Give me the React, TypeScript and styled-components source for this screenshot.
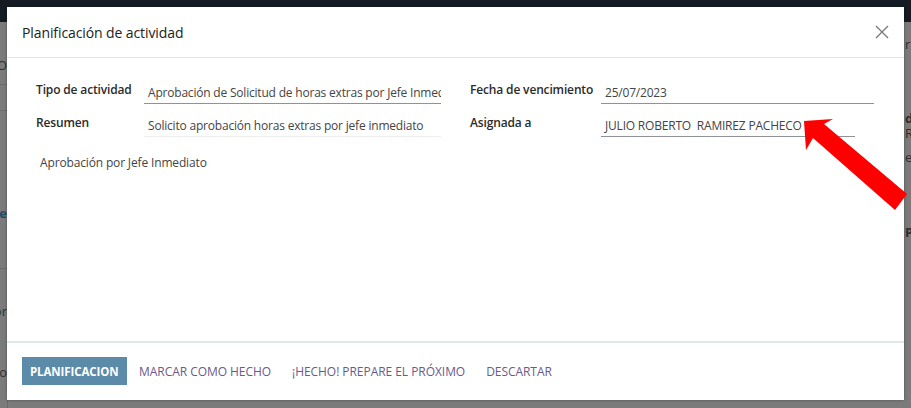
import styled, { createGlobalStyle } from "styled-components";

const GlobalStyle = createGlobalStyle`
  html, body {
    margin: 0;
    padding: 0;
    width: 911px;
    height: 408px;
    overflow: hidden;
    font-family: "Open Sans", "Noto Sans", sans-serif;
  }
`;

const Page = styled.div`
  position: relative;
  width: 911px;
  height: 408px;
  background: #7b7b7b;
  overflow: hidden;
`;

const TopBar = styled.div`
  height: 22px;
  background: #141b23;
`;

const Backdrop = styled.div`
  position: absolute;
  left: 0;
  right: 0;
  top: 22px;
  bottom: 0;
  display: flex;
  justify-content: space-between;
  font-size: 13px;
`;

const Edge = styled.div<{ side: "left" | "right" }>`
  width: 7px;
  height: 100%;
  position: relative;
  overflow: hidden;
  ${(p) => (p.side === "left" ? "border-right: 1px solid #6a6a6a;" : "")}
`;

const Ghost = styled.span<{ top: number; side: "left" | "right" }>`
  position: absolute;
  top: ${(p) => p.top}px;
  ${(p) => (p.side === "left" ? "right: 0;" : "left: 1px;")}
  white-space: nowrap;
  line-height: 14px;
  color: #2f2f2f;
`;

const GhostLine = styled.div<{ top: number }>`
  position: absolute;
  top: ${(p) => p.top}px;
  left: 0;
  right: 0;
  height: 1px;
  background: #6d6d6d;
`;

const Modal = styled.div`
  position: absolute;
  left: 7px;
  top: 7px;
  width: 897px;
  height: 393px;
  background: #fff;
  display: flex;
  flex-direction: column;
  box-shadow: 0 0 3px rgba(0, 0, 0, 0.35);
`;

const Header = styled.div`
  height: 51px;
  box-sizing: border-box;
  padding: 0 14px 0 15px;
  display: flex;
  align-items: center;
  justify-content: space-between;
  border-bottom: 1px solid #e6e6e6;
`;

const Title = styled.h4`
  margin: 0;
  font-size: 14px;
  font-weight: 500;
  color: #222;
  letter-spacing: -0.1px;
`;

const Close = styled.button`
  border: none;
  background: none;
  padding: 0;
  width: 16px;
  height: 16px;
  display: flex;
  cursor: pointer;
`;

const Body = styled.div`
  flex: 1;
  padding: 22px 29px 0 29px;
`;

const Grid = styled.div`
  display: grid;
  grid-template-columns: 434px 1fr;
`;

const Column = styled.div`
  display: flex;
  flex-direction: column;
  gap: 9px;
`;

const Row = styled.div<{ labelWidth: number }>`
  display: grid;
  grid-template-columns: ${(p) => p.labelWidth}px 1fr;
  align-items: start;
`;

const Label = styled.label`
  font-size: 12px;
  font-weight: 600;
  color: #2b2b2b;
  line-height: 18px;
  padding-top: 1px;
  white-space: nowrap;
  letter-spacing: -0.15px;
`;

const Field = styled.div<{ width: number; line: string }>`
  width: ${(p) => p.width}px;
  height: 24px;
  box-sizing: border-box;
  padding: 4px 0 0 4px;
  font-size: 12px;
  color: #444;
  white-space: nowrap;
  overflow: hidden;
  letter-spacing: -0.2px;
  border-bottom: 1px solid ${(p) => p.line};
`;

const Note = styled.p`
  margin: 17px 0 0 4px;
  font-size: 12px;
  color: #444;
  letter-spacing: -0.15px;
`;

const Footer = styled.div`
  height: 59px;
  box-sizing: border-box;
  border-top: 2px solid #e2e7ec;
  padding: 14px 15px 0 15px;
  display: flex;
  align-items: flex-start;
  gap: 2px;
`;

const Button = styled.button<{ primary?: boolean }>`
  height: 28px;
  border: none;
  padding: 0 ${(p) => (p.primary ? "8px" : "9.5px")};
  font-family: "Open Sans", "Noto Sans", sans-serif;
  font-size: ${(p) => (p.primary ? "11.5px" : "12px")};
  text-transform: uppercase;
  cursor: pointer;
  letter-spacing: ${(p) => (p.primary ? "-0.1px" : "-0.05px")};
  background: ${(p) => (p.primary ? "#5b8ba8" : "transparent")};
  color: ${(p) => (p.primary ? "#fff" : "#6a5a8c")};
  font-weight: ${(p) => (p.primary ? 700 : 500)};
  margin-right: ${(p) => (p.primary ? "1px" : "0")};
`;

const Arrow = styled.svg`
  position: absolute;
  left: 795px;
  top: 110px;
  width: 116px;
  height: 110px;
  pointer-events: none;
`;

export default function App() {
  return (
    <>
      <GlobalStyle />
      <Page>
        <TopBar />
        <Backdrop>
          <Edge side="left">
            <Ghost side="left" top={36}>O</Ghost>
            <GhostLine top={62} />
            <GhostLine top={88} />
            <Ghost side="left" top={184} style={{ color: "#1e4a63", fontWeight: 700 }}>e</Ghost>
            <GhostLine top={246} />
            <Ghost side="left" top={282}>or</Ghost>
            <Ghost side="left" top={343}>vo</Ghost>
          </Edge>
          <Edge side="right">
            <Ghost side="right" top={15}>r</Ghost>
            <Ghost side="right" top={89} style={{ fontWeight: 700 }}>de</Ghost>
            <Ghost side="right" top={104}>R</Ghost>
            <Ghost side="right" top={128}>e</Ghost>
            <Ghost side="right" top={203} style={{ fontWeight: 700 }}>P</Ghost>
          </Edge>
        </Backdrop>
        <Modal>
          <Header>
            <Title>Planificación de actividad</Title>
            <Close aria-label="Cerrar">
              <svg width="16" height="16" viewBox="0 0 16 16">
                <path d="M2 2 L14 14 M14 2 L2 14" stroke="#777" strokeWidth="1.3" fill="none" />
              </svg>
            </Close>
          </Header>
          <Body>
            <Grid>
              <Column>
                <Row labelWidth={108}>
                  <Label>Tipo de actividad</Label>
                  <Field width={297} line="#8f9298">
                    Aprobación de Solicitud de horas extras por Jefe Inmediato
                  </Field>
                </Row>
                <Row labelWidth={108}>
                  <Label>Resumen</Label>
                  <Field width={297} line="#eeeeee">
                    Solicito aprobación horas extras por jefe inmediato
                  </Field>
                </Row>
              </Column>
              <Column>
                <Row labelWidth={131}>
                  <Label>Fecha de vencimiento</Label>
                  <Field width={273} line="#8f9298">25/07/2023</Field>
                </Row>
                <Row labelWidth={131}>
                  <Label>Asignada a</Label>
                  <Field width={254} line="#8f9298">
                    JULIO ROBERTO&nbsp;&nbsp;RAMIREZ PACHECO
                  </Field>
                </Row>
              </Column>
            </Grid>
            <Note>Aprobación por Jefe Inmediato</Note>
          </Body>
          <Footer>
            <Button primary>Planificacion</Button>
            <Button>Marcar como hecho</Button>
            <Button>¡Hecho! prepare el próximo</Button>
            <Button>Descartar</Button>
          </Footer>
        </Modal>
        <Arrow viewBox="0 0 116 110">
          <polygon
            points="9,11 38,9 29,14 112,84 100,100 18,28 11,40"
            fill="#ff0000"
          />
        </Arrow>
      </Page>
    </>
  );
}
